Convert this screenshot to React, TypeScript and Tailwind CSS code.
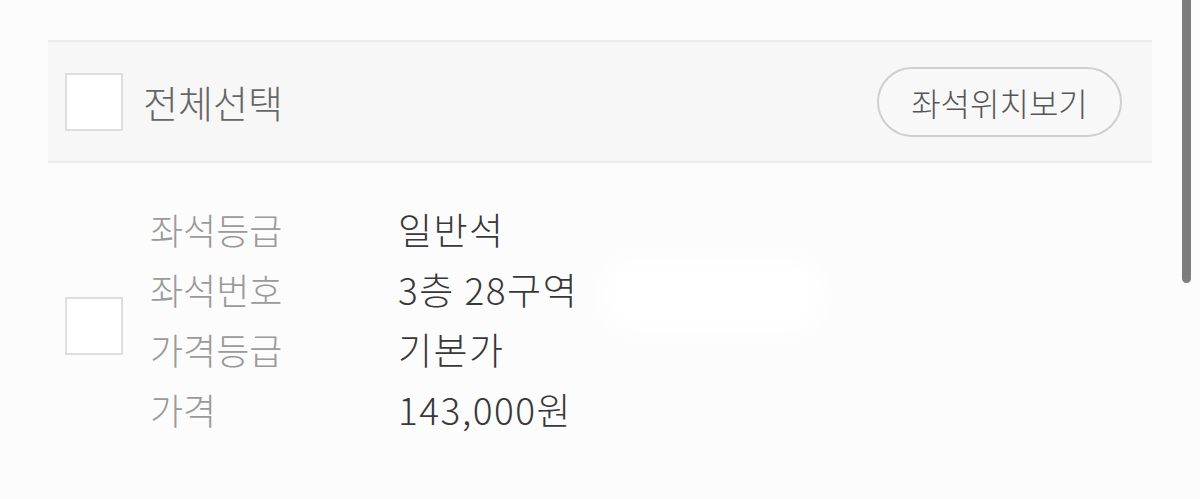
import React from 'react';

const ROWS: { k: string; v: string }[] = [
  { k: '좌석등급', v: '일반석' },
  { k: '좌석번호', v: '3층 28구역' },
  { k: '가격등급', v: '기본가' },
  { k: '가격', v: '143,000원' },
];

function Box({ className = '' }: { className?: string }) {
  return <div className={`w-[58px] h-[58px] shrink-0 bg-white border-2 border-[#dedede] ${className}`} />;
}

export default function App() {
  return (
    <div
      className="relative w-[1200px] h-[499px] overflow-hidden bg-[#fcfcfc] pt-[40px] font-light"
      style={{ fontFamily: '"Noto Sans CJK KR", "Noto Sans", sans-serif' }}
    >
      {/* select all bar */}
      <div className="mx-[48px] h-[123px] bg-[#f7f7f7] border-y-2 border-[#ececec] flex items-center pl-[17px] pr-[30px]">
        <Box />
        <span className="ml-[20px] text-[38px] leading-none text-[#666]">전체선택</span>
        <button className="ml-auto w-[245px] h-[70px] rounded-full border-2 border-[#cfcfcf] bg-[#f8f8f8] text-[32px] leading-none text-[#555]">
          좌석위치보기
        </button>
      </div>

      {/* seat item */}
      <div className="mx-[48px] flex items-start pl-[17px] pt-[36px]">
        <Box className="mt-[98px]" />
        <div className="ml-[27px] flex flex-col">
          {ROWS.map((r) => (
            <div key={r.k} className="flex items-center h-[60px]">
              <span className="w-[248px] text-[36px] leading-none text-[#9a9a9a]">{r.k}</span>
              <span className="text-[37px] leading-none text-[#383838] tracking-[1.5px]">{r.v}</span>
            </div>
          ))}
        </div>
      </div>

      {/* smudge over the seat detail */}
      <div className="absolute left-[600px] top-[258px] w-[225px] h-[75px] rounded-full bg-white blur-[12px]" />

      {/* scroll indicator */}
      <div className="absolute left-[1182px] top-0 w-[9px] h-[283px] rounded-b-full bg-[#7d7d7d]" />
    </div>
  );
}
